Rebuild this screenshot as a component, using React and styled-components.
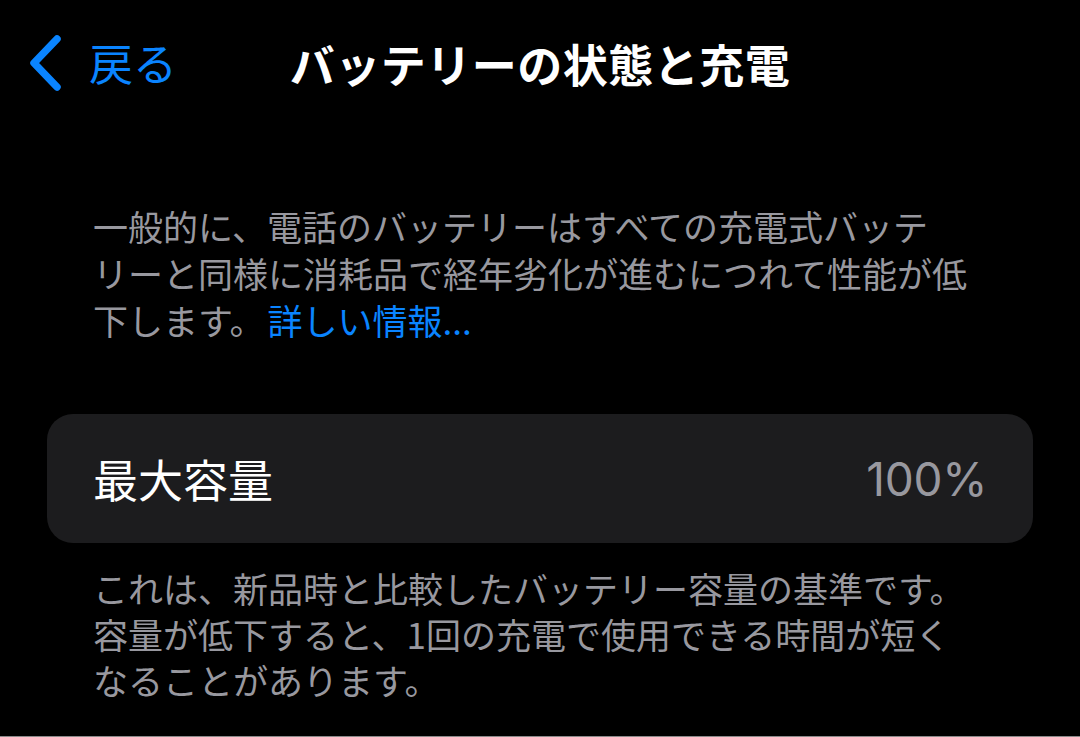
import styled, { createGlobalStyle } from "styled-components";

const GlobalStyle = createGlobalStyle`
    html, body {
        margin: 0;
        padding: 0;
        background: #000000;
    }
    body {
        font-family: "Noto Sans CJK JP", "Noto Sans", sans-serif;
        -webkit-font-smoothing: antialiased;
    }
`;

const Screen = styled.div`
    box-sizing: border-box;
    width: 1080px;
    height: 737px;
    overflow: hidden;
    background: #000000;
    color: #ffffff;
    border-bottom: 1px solid #8a8a8a;
`;

const NavBar = styled.div`
    position: relative;
    height: 90px;
    margin-top: 18px;
    display: flex;
    align-items: center;
    justify-content: center;
`;

const BackButton = styled.div`
    position: absolute;
    left: 26px;
    top: 0;
    bottom: 0;
    display: flex;
    align-items: center;
    gap: 27px;
    color: #0a84ff;
    font-size: 44px;
    line-height: 1;
`;

const BackLabel = styled.span`
    margin-top: -2px;
`;

const Title = styled.h1`
    margin: 0;
    font-size: 45px;
    font-weight: 700;
    letter-spacing: 0.5px;
    line-height: 1;
`;

const Note = styled.p`
    margin: ${(p) => p.$top}px 0 0;
    padding-left: 93px;
    font-size: 35px;
    line-height: ${(p) => p.$lh}px;
    color: #98989f;
    white-space: nowrap;
`;

const Link = styled.span`
    margin-left: 3px;
    color: #0a84ff;
`;

const Card = styled.div`
    margin: 71px 47px 0;
    height: 129px;
    border-radius: 26px;
    background: #1c1c1e;
    display: flex;
    align-items: center;
    justify-content: space-between;
    padding: 0 46px 0 46px;
`;

const CardLabel = styled.span`
    font-size: 45px;
    color: #ffffff;
`;

const CardValue = styled.span`
    font-family: Inter, "Noto Sans", sans-serif;
    font-size: 46px;
    color: #98989f;
    letter-spacing: -0.3px;
`;

const Chevron = () => (
    <svg width="36" height="58" viewBox="0 0 36 58">
        <polyline
            points="31,5 8,29 31,53"
            fill="none"
            stroke="#0a84ff"
            strokeWidth="7.5"
            strokeLinecap="round"
            strokeLinejoin="round"
        />
    </svg>
);

const App = () => {
    return (
        <Screen>
            <GlobalStyle />
            <NavBar>
                <BackButton>
                    <Chevron />
                    <BackLabel>戻る</BackLabel>
                </BackButton>
                <Title>バッテリーの状態と充電</Title>
            </NavBar>
            <Note $top={94} $lh={47}>
                一般的に、電話のバッテリーはすべての充電式バッテ
                <br />
                リーと同様に消耗品で経年劣化が進むにつれて性能が低
                <br />
                下します。<Link>詳しい情報...</Link>
            </Note>
            <Card>
                <CardLabel>最大容量</CardLabel>
                <CardValue>100%</CardValue>
            </Card>
            <Note $top={22} $lh={46}>
                これは、新品時と比較したバッテリー容量の基準です。
                <br />
                容量が低下すると、1回の充電で使用できる時間が短く
                <br />
                なることがあります。
            </Note>
        </Screen>
    );
};

export default App;
